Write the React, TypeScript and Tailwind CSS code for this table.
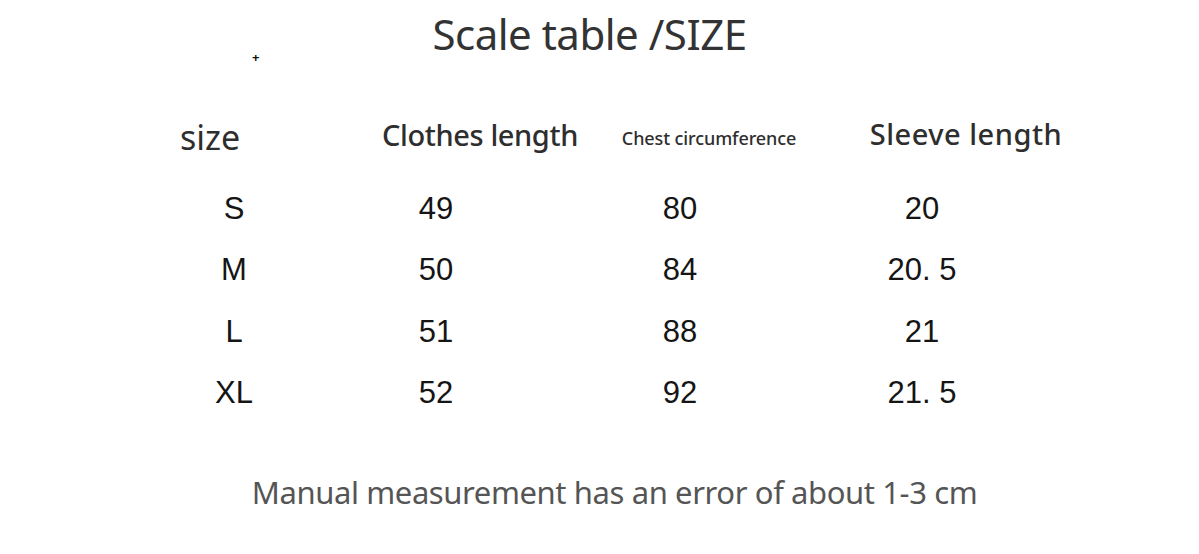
import React from 'react';

const ROWS = [
  ['S', '49', '80', '20'],
  ['M', '50', '84', '20. 5'],
  ['L', '51', '88', '21'],
  ['XL', '52', '92', '21. 5'],
];

const sans = "font-['Noto_Sans',sans-serif]";
const arial = "font-['Liberation_Sans',Arial,sans-serif]";

export default function App() {
  return (
    <div className="relative w-full h-[554px] bg-white overflow-hidden">
      <span className="absolute left-[252px] top-[51px] text-[13px] font-bold leading-none text-[#111]">+</span>

      <div className="flex flex-col">
        <h1 className={`${sans} text-[42px] leading-none tracking-[-0.5px] text-[#333] pt-[13px] flex justify-center`}>
          <span className="ml-[-20px]">Scale table /SIZE</span>
        </h1>

        {/* header row */}
        <div className={`${sans} flex items-end ml-[110px] mt-[61px] h-[36px] text-[#2e2e2e] font-medium whitespace-nowrap`}>
          <div className="w-[200px] flex justify-center text-[34px] leading-none font-normal translate-y-[2px]">size</div>
          <div className="w-[340px] flex justify-center text-[29px] leading-none tracking-[-0.4px] -translate-y-[3px]">Clothes length</div>
          <div className="w-[118px] flex justify-center text-[18px] leading-none tracking-[-0.1px] -translate-y-[5px]">Chest circumference</div>
          <div className="w-[396px] flex justify-center text-[29px] leading-none tracking-[0.5px] -translate-y-[4px]">Sleeve length</div>
        </div>

        {/* data rows */}
        <div className={`${arial} grid grid-cols-[200px_204px_284px_200px] ml-[134px] mt-[26px] text-[31px] text-[#151515]`}>
          {ROWS.map((r) => (
            <React.Fragment key={r[0]}>
              {r.map((v, i) => (
                <div key={i} className="h-[61.3px] flex items-center justify-center leading-none">
                  {v}
                </div>
              ))}
            </React.Fragment>
          ))}
        </div>

        <p className={`${sans} text-center text-[31px] leading-none tracking-[-0.4px] text-[#555] mt-[54px] ml-[30px]`}>
          Manual measurement has an error of about 1-3 cm
        </p>
      </div>
    </div>
  );
}
